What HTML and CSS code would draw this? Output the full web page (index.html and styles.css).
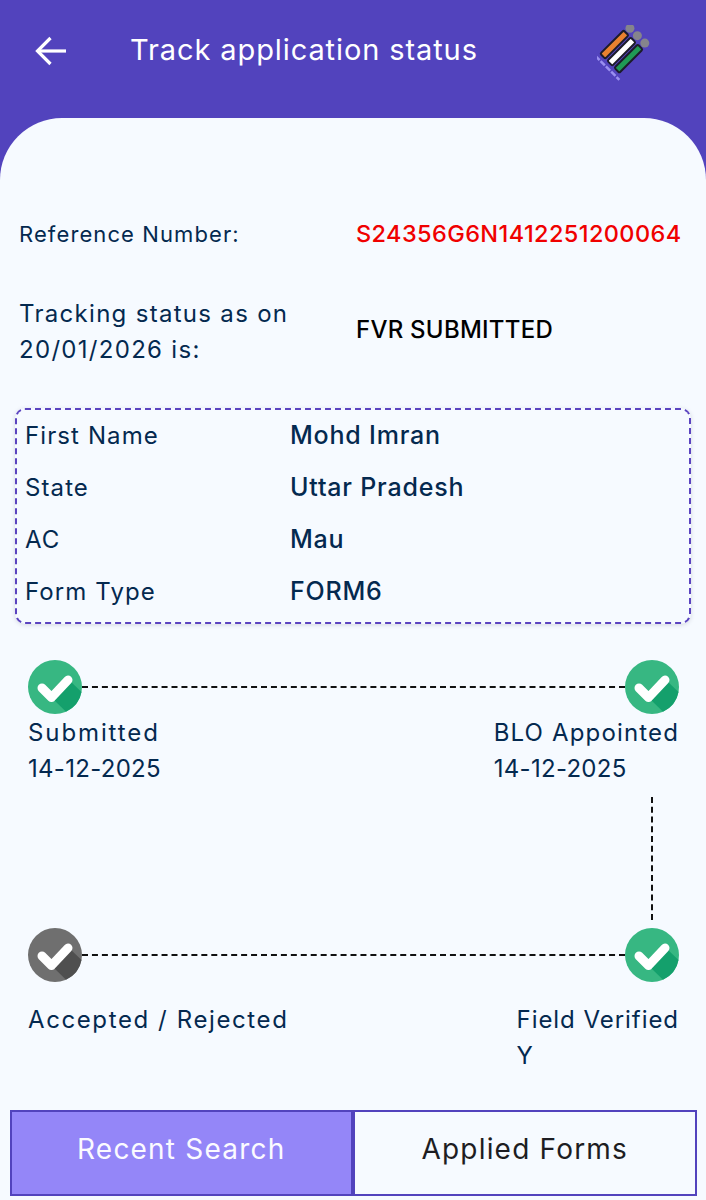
FILE: index.html
```html
<!DOCTYPE html>
<html lang="en">
<head>
<meta charset="utf-8">
<title>Track application status</title>
<link rel="stylesheet" href="styles.css">
</head>
<body>
<div class="page">
  <header class="appbar">
    <svg class="back" width="32" height="30" viewBox="0 0 32 30" fill="none" stroke="#fff" stroke-width="3.2">
      <path d="M31 15H3"/><path d="M15.500 2 2.500 15l13 13"/>
    </svg>
    <h1 class="title">Track application status</h1>
    <svg class="logo" width="56" height="56" viewBox="0 0 56 56">
      <g transform="rotate(-45 28 28)">
        <rect x="10" y="11" width="33" height="7" rx="1.500" fill="#e8812f" stroke="#1c1c2a" stroke-width="2"/>
        <rect x="10" y="21" width="33" height="7" rx="1.500" fill="#fff" stroke="#1c1c2a" stroke-width="2"/>
        <rect x="10" y="31" width="33" height="7" rx="1.500" fill="#1f9a55" stroke="#1c1c2a" stroke-width="2"/>
        <circle cx="49" cy="14" r="4.500" fill="#85848c"/>
        <circle cx="49" cy="24.500" r="4.500" fill="#85848c"/>
        <circle cx="49" cy="35" r="4.500" fill="#85848c"/>
        <path d="M5 9V43" stroke="#9a8ff0" stroke-width="2.500" stroke-dasharray="6 1.500"/>
      </g>
    </svg>
  </header>
  <main class="panel">
    <div class="summary">
      <div class="summary-row ref-row">
        <span class="label ref-label">Reference Number:</span>
        <span class="ref-value">S24356G6N1412251200064</span>
      </div>
      <div class="summary-row status-row">
        <span class="label status-label">Tracking status as on<br>20/01/2026 is:</span>
        <span class="status-value">FVR SUBMITTED</span>
      </div>
    </div>
    <section class="details">
      <div class="detail"><span class="detail-key">First Name</span><span class="detail-value">Mohd Imran</span></div>
      <div class="detail"><span class="detail-key">State</span><span class="detail-value">Uttar Pradesh</span></div>
      <div class="detail"><span class="detail-key">AC</span><span class="detail-value">Mau</span></div>
      <div class="detail"><span class="detail-key">Form Type</span><span class="detail-value">FORM6</span></div>
    </section>
    <section class="timeline">
      <div class="track">
        <svg class="check" viewBox="0 0 54 54"><circle cx="27" cy="27" r="27" fill="#37b782"/><path d="M24 38 41 20l12.500 12A27 27 0 0 1 38 51.700z" fill="#14a06c"/><path d="M14 28l9.500 9.500L40 20" fill="none" stroke="#fff" stroke-width="9" stroke-linecap="round" stroke-linejoin="round"/></svg>
        <span class="dash"></span>
        <svg class="check" viewBox="0 0 54 54"><circle cx="27" cy="27" r="27" fill="#37b782"/><path d="M24 38 41 20l12.500 12A27 27 0 0 1 38 51.700z" fill="#14a06c"/><path d="M14 28l9.500 9.500L40 20" fill="none" stroke="#fff" stroke-width="9" stroke-linecap="round" stroke-linejoin="round"/></svg>
      </div>
      <div class="captions first-captions">
        <p class="caption"><span class="cap-wide">Submitted</span><br><span class="cap-date">14-12-2025</span></p>
        <p class="caption caption-left"><span>BLO Appointed</span><br><span class="cap-date">14-12-2025</span></p>
      </div>
      <div class="vertical"><span class="vdash"></span></div>
      <div class="track">
        <svg class="check" viewBox="0 0 54 54"><circle cx="27" cy="27" r="27" fill="#6f6f6f"/><path d="M24 38 41 20l12.500 12A27 27 0 0 1 38 51.700z" fill="#4f4f4f"/><path d="M14 28l9.500 9.500L40 20" fill="none" stroke="#fff" stroke-width="9" stroke-linecap="round" stroke-linejoin="round"/></svg>
        <span class="dash"></span>
        <svg class="check" viewBox="0 0 54 54"><circle cx="27" cy="27" r="27" fill="#37b782"/><path d="M24 38 41 20l12.500 12A27 27 0 0 1 38 51.700z" fill="#14a06c"/><path d="M14 28l9.500 9.500L40 20" fill="none" stroke="#fff" stroke-width="9" stroke-linecap="round" stroke-linejoin="round"/></svg>
      </div>
      <div class="captions second-captions">
        <p class="caption"><span class="cap-wide cap-tight">Accepted / Rejected</span></p>
        <p class="caption caption-left"><span class="cap-verified">Field Verified</span><br><span>Y</span></p>
      </div>
    </section>
    <nav class="tabs">
      <button class="tab tab-active">Recent Search</button>
      <button class="tab">Applied Forms</button>
    </nav>
  </main>
</div>
</body>
</html>
```
FILE: styles.css
```css
* { box-sizing: border-box; }
html, body { margin: 0; padding: 0; }
body {
  width: 706px;
  height: 1200px;
  overflow: hidden;
  background: #5243bd;
  font-family: "Inter", "Noto Sans", sans-serif;
  color: #04294f;
}
.page { display: flex; flex-direction: column; height: 1200px; }
.appbar {
  height: 118px;
  display: flex;
  align-items: flex-start;
  padding: 23px 53px 0 35px;
  flex: none;
}
.back { margin-top: 13px; flex: none; }
.title {
  margin: 0 0 0 63px;
  flex: 1;
  font-size: 29px;
  font-weight: 400;
  letter-spacing: 0.9px;
  line-height: 54px;
  color: #fff;
  white-space: nowrap;
}
.logo { margin: 2px 0 0 0; flex: none; }
.panel {
  flex: 1;
  background: #f6faff;
  border-radius: 62px 62px 0 0;
  display: flex;
  flex-direction: column;
  padding: 0 9px 4px 10px;
}
.summary { padding: 96px 0 0 9px; }
.summary-row { display: flex; align-items: center; }
.label { width: 337px; font-size: 24px; letter-spacing: 1.3px; line-height: 36px; flex: none; white-space: nowrap; }
.ref-label { font-size: 22px; letter-spacing: 1.1px; }
.ref-value { font-size: 23.500px; font-weight: 500; letter-spacing: 0.4px; color: #f00000; line-height: 40px; white-space: nowrap; }
.status-row { margin-top: 42px; }
.status-value { font-size: 24px; font-weight: 500; letter-spacing: 0.25px; color: #000; margin-bottom: 6px; }
.details {
  margin: 40px 6px 0 5px;
  height: 216px;
  border: 2px dashed #5b44c0;
  border-radius: 10px;
  padding: 0 8px;
  box-shadow: 0 1px 4px rgba(60, 60, 90, 0.18);
}
.detail { display: flex; align-items: center; height: 52px; padding-bottom: 2px; }
.detail-key { width: 265px; font-size: 24px; letter-spacing: 1.1px; flex: none; }
.detail-value { font-size: 25px; font-weight: 500; letter-spacing: 0.8px; }
.timeline { margin-top: 36px; padding: 0 18px 0 18px; }
.track { display: flex; align-items: center; height: 54px; }
.check { width: 54px; height: 54px; flex: none; display: block; }
.dash { flex: 1; border-top: 2px dashed #111; }
.captions { display: flex; justify-content: space-between; }
.first-captions { margin-top: 1px; }
.second-captions { margin-top: 20px; height: 72px; }
.caption { margin: 0; font-size: 24px; letter-spacing: 1.15px; line-height: 36px; white-space: nowrap; }
.cap-wide { letter-spacing: 1.9px; }
.cap-tight { letter-spacing: 1.6px; }
.cap-date { letter-spacing: 0.3px; }
.cap-verified { letter-spacing: 0.95px; }
.vertical { display: flex; justify-content: flex-end; height: 141px; padding: 10px 26px 0 0; }
.vdash { height: 123px; border-left: 2px dashed #111; }
.tabs { margin-top: auto; display: flex; height: 86px; }
.tab {
  width: 344px;
  height: 86px;
  border: 2px solid #5243bd;
  background: #f6faff;
  font: 400 28px "Inter", "Noto Sans", sans-serif;
  letter-spacing: 1.2px;
  color: #1d1d22;
  padding: 0 0 8px;
}
.tab-active { background: #9486f8; color: #fbfaff; border-right-width: 3px; }
.tab + .tab { border-left-width: 1px; }
```
